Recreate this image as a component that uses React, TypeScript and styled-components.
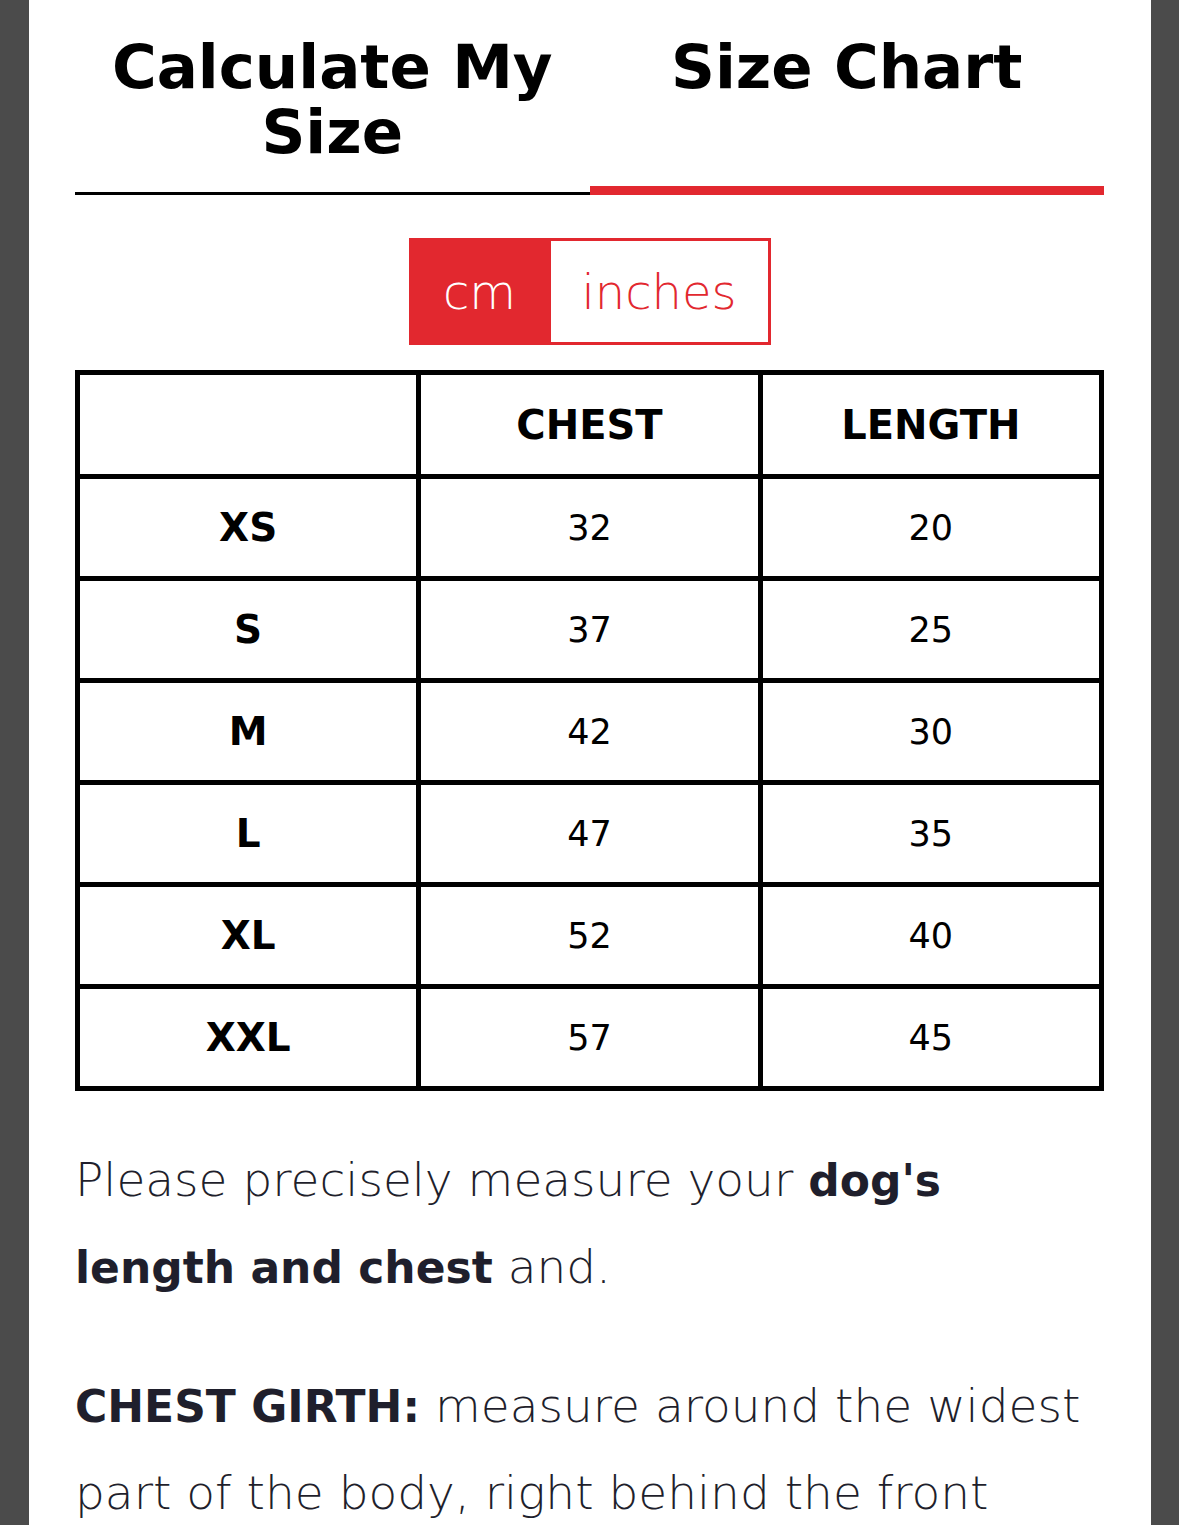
import React, { useState } from 'react';
import styled, { createGlobalStyle } from 'styled-components';

const GlobalStyle = createGlobalStyle`
  html, body {
    margin: 0;
    padding: 0;
    background: #4b4b4b;
  }
  body {
    font-family: "DejaVu Sans", "Noto Sans", sans-serif;
  }
`;

const Page = styled.div`
  display: flex;
  justify-content: center;
  padding: 0 28px 0 29px;
  min-height: 1525px;
  overflow: hidden;
`;

const Panel = styled.main`
  flex: 1;
  background: #ffffff;
  padding: 0 47px 40px 46px;
`;

const Tabs = styled.div`
  display: grid;
  grid-template-columns: 1fr 1fr;
`;

const Tab = styled.button<{ active?: boolean }>`
  box-sizing: border-box;
  height: 195px;
  background: none;
  border: none;
  border-bottom: ${({ active }) => (active ? '9px solid #e2282f' : '3px solid #000')};
  padding: 34px 20px 0;
  font-family: "DejaVu Sans", sans-serif;
  font-weight: 700;
  font-size: 61px;
  line-height: 65px;
  color: #000;
  text-align: center;
  cursor: pointer;
  display: flex;
  justify-content: center;
  align-items: flex-start;
`;

const UnitRow = styled.div`
  display: flex;
  justify-content: center;
  margin-top: 43px;
`;

const UnitButton = styled.button<{ selected?: boolean; w: number }>`
  width: ${({ w }) => w}px;
  height: 107px;
  box-sizing: border-box;
  border: 3px solid #e2282f;
  background: ${({ selected }) => (selected ? '#e2282f' : '#fff')};
  color: ${({ selected }) => (selected ? '#fff' : '#e2282f')};
  font-family: "DejaVu Sans", sans-serif;
  font-weight: 300;
  font-size: 48px;
  padding: 0;
  cursor: pointer;
  & + & {
    border-left: none;
  }
`;

const Table = styled.table`
  margin-top: 25px;
  width: 100%;
  border-collapse: collapse;
  border: 5px solid #000;
  table-layout: fixed;
`;

const Cell = styled.td<{ bold?: boolean }>`
  border: 5px solid #000;
  height: 97px;
  padding: 0;
  text-align: center;
  font-family: "DejaVu Sans", sans-serif;
  font-weight: ${({ bold }) => (bold ? 700 : 400)};
  font-size: ${({ bold }) => (bold ? '39px' : '35px')};
  color: #000;
`;

const HeadCell = styled.th`
  border: 5px solid #000;
  height: 99px;
  padding: 0;
  text-align: center;
  font-family: "DejaVu Sans", sans-serif;
  font-weight: 700;
  font-size: 40px;
  color: #000;
`;

const Paragraph = styled.p`
  margin: 46px 0 0;
  font-family: "DejaVu Sans", sans-serif;
  font-weight: 300;
  font-size: 47px;
  line-height: 86px;
  color: #1f1f2c;
  & + & {
    margin-top: 52px;
  }
  strong {
    font-weight: 700;
    font-size: 44px;
  }
`;

const sizes = [
  { label: 'XS', chest: 32, length: 20 },
  { label: 'S', chest: 37, length: 25 },
  { label: 'M', chest: 42, length: 30 },
  { label: 'L', chest: 47, length: 35 },
  { label: 'XL', chest: 52, length: 40 },
  { label: 'XXL', chest: 57, length: 45 },
];

export default function App() {
  const [tab, setTab] = useState<'calc' | 'chart'>('chart');
  const [unit, setUnit] = useState<'cm' | 'in'>('cm');

  return (
    <>
      <GlobalStyle />
      <Page>
        <Panel>
          <Tabs>
            <Tab active={tab === 'calc'} onClick={() => setTab('calc')}>
              Calculate My Size
            </Tab>
            <Tab active={tab === 'chart'} onClick={() => setTab('chart')}>
              Size Chart
            </Tab>
          </Tabs>

          <UnitRow>
            <UnitButton w={142} selected={unit === 'cm'} onClick={() => setUnit('cm')}>
              cm
            </UnitButton>
            <UnitButton w={220} selected={unit === 'in'} onClick={() => setUnit('in')}>
              inches
            </UnitButton>
          </UnitRow>

          <Table>
            <thead>
              <tr>
                <HeadCell />
                <HeadCell>CHEST</HeadCell>
                <HeadCell>LENGTH</HeadCell>
              </tr>
            </thead>
            <tbody>
              {sizes.map(s => (
                <tr key={s.label}>
                  <Cell bold>{s.label}</Cell>
                  <Cell>{s.chest}</Cell>
                  <Cell>{s.length}</Cell>
                </tr>
              ))}
            </tbody>
          </Table>

          <Paragraph>
            Please precisely measure your <strong>dog's length and chest</strong> and.
          </Paragraph>
          <Paragraph>
            <strong>CHEST GIRTH:</strong> measure around the widest part of the body, right
            behind the front legs.
          </Paragraph>
        </Panel>
      </Page>
    </>
  );
}
